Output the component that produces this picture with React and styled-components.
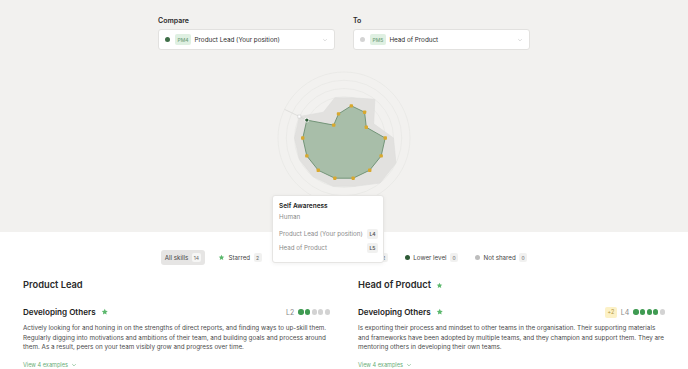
import React from "react";
import styled, { createGlobalStyle } from "styled-components";

const Global = createGlobalStyle`
  html, body { margin: 0; padding: 0; background: #fff; }
  body { font-family: Inter, "Noto Sans", sans-serif; color: #2a2a2a; -webkit-font-smoothing: antialiased; }
  * { box-sizing: border-box; }
`;

const Page = styled.div`
  width: 688px;
  min-height: 369px;
  overflow: hidden;
`;

const Top = styled.section`
  position: relative;
  height: 232px;
  background: #f2f1ef;
  display: flex;
  flex-direction: column;
  align-items: center;
  padding-top: 16px;
`;

const SelectRow = styled.div`
  display: grid;
  grid-template-columns: 177px 177px;
  column-gap: 18px;
`;

const Field = styled.div`
  display: flex;
  flex-direction: column;
  gap: 4px;
`;

const Label = styled.div`
  font-size: 7px;
  font-weight: 600;
  line-height: 9px;
  color: #2a2a2a;
`;

const SelectBox = styled.div`
  height: 21px;
  background: #fff;
  border: 1px solid #e2e1df;
  border-radius: 3px;
  display: flex;
  align-items: center;
  padding: 0 6px 0 6px;
  gap: 3.5px;
`;

const Dot = styled.span`
  width: ${p => p.$size || 5}px;
  height: ${p => p.$size || 5}px;
  border-radius: 50%;
  background: ${p => p.$color};
  flex: none;
`;

const Code = styled.span`
  height: 11px;
  padding: 0 2.5px;
  border-radius: 2px;
  background: #dff0e2;
  color: #74a27d;
  font-size: 5px;
  display: inline-flex;
  align-items: center;
  font-weight: 500;
  margin-left: 1.5px;
`;

const SelectText = styled.span`
  font-size: 6.3px;
  color: #2a2a2a;
  flex: 1;
`;

const Chart = styled.svg`
  display: block;
  margin-top: 16px;
`;

const Tooltip = styled.div`
  position: absolute;
  left: 272px;
  top: 195px;
  width: 112px;
  height: 68px;
  background: #fff;
  border: 1px solid #e6e5e3;
  border-radius: 3px;
  box-shadow: 0 1px 4px rgba(0,0,0,0.06);
  padding: 6px 5px 0 6px;
  z-index: 5;
`;

const TipTitle = styled.div`
  font-size: 6.5px;
  font-weight: 600;
  line-height: 9px;
  color: #222;
`;

const TipSub = styled.div`
  font-size: 6.3px;
  line-height: 9px;
  color: #8a8a8a;
  margin-top: 1.5px;
  margin-bottom: 6px;
`;

const TipRow = styled.div`
  display: flex;
  justify-content: space-between;
  align-items: center;
  font-size: 6.2px;
  color: #8a8a8a;
  height: 12px;
  margin-bottom: 2px;
`;

const LevelTag = styled.span`
  width: 11px;
  height: 10px;
  border-radius: 2px;
  background: #f1f1f0;
  color: #555;
  font-size: 5px;
  font-weight: 600;
  display: inline-flex;
  align-items: center;
  justify-content: center;
`;

const Filters = styled.div`
  display: flex;
  justify-content: center;
  align-items: center;
  gap: 9px;
  margin-top: 18px;
  padding-left: 4px;
`;

const Pill = styled.div`
  height: 15px;
  display: flex;
  align-items: center;
  gap: 3.5px;
  padding: 0 4px;
  border-radius: 3px;
  background: ${p => (p.$active ? "#e6e5e4" : "transparent")};
  font-size: 6.2px;
  color: #444;
`;

const Count = styled.span`
  min-width: 8px;
  height: 9px;
  padding: 0 2px;
  border-radius: 2px;
  background: ${p => (p.$active ? "#f6f6f5" : "#f1f1f0")};
  color: #666;
  font-size: 5px;
  display: inline-flex;
  align-items: center;
  justify-content: center;
`;

const Columns = styled.div`
  display: grid;
  grid-template-columns: 1fr 1fr;
  column-gap: 28px;
  padding: 0 23px;
  margin-top: 14px;
`;

const Column = styled.div`
  display: flex;
  flex-direction: column;
`;

const ColTitle = styled.h2`
  margin: 0;
  font-size: 9.3px;
  font-weight: 600;
  line-height: 12px;
  color: #2a2a2a;
  display: flex;
  align-items: center;
  gap: 5px;
`;

const SkillHead = styled.div`
  display: flex;
  align-items: center;
  justify-content: space-between;
  margin-top: 15px;
  height: 12px;
`;

const SkillName = styled.h3`
  margin: 0;
  font-size: 8.1px;
  font-weight: 600;
  color: #222;
  display: flex;
  align-items: center;
  gap: 5px;
`;

const LevelBox = styled.div`
  display: flex;
  align-items: center;
  gap: 4px;
  font-size: 7px;
  color: #888;
`;

const Dots = styled.div`
  display: flex;
  gap: 1.3px;
`;

const Plus = styled.span`
  width: 12px;
  height: 11px;
  border-radius: 2px;
  background: #fcf1c6;
  color: #b0963f;
  font-size: 5.5px;
  display: inline-flex;
  align-items: center;
  justify-content: center;
`;

const Desc = styled.p`
  margin: 6px 0 0;
  font-size: 6.3px;
  line-height: 9.6px;
  color: #4a4a4a;
`;

const Examples = styled.div`
  margin-top: 9px;
  font-size: 5.6px;
  color: #6aae78;
  display: flex;
  align-items: center;
  gap: 3px;
`;

const Star = ({ size = 7 }) => (
  <svg width={size} height={size} viewBox="0 0 24 24">
    <path
      d="M12 2.5l2.9 6.1 6.6.8-4.9 4.6 1.3 6.6L12 17.3l-5.9 3.3 1.3-6.6-4.9-4.6 6.6-.8z"
      fill="#5cb86d"
    />
  </svg>
);

const Chevron = ({ size = 6, color = "#c4c4c4" }) => (
  <svg width={size} height={size} viewBox="0 0 10 10">
    <path d="M2 3.5l3 3 3-3" fill="none" stroke={color} strokeWidth="1" />
  </svg>
);

const C = 72;
const unit = 8.25;
const angle = k => ((-77.143 + k * 25.714) * Math.PI) / 180;
const pt = (k, L) => {
  const r = unit * (L + 1);
  return [C + r * Math.cos(angle(k)), C + r * Math.sin(angle(k))];
};
const mine = [3, 3, 2, 4, 4, 4, 4, 4, 4, 4, 4, 4, 1, 2];
const theirs = [4, 5, 3, 5, 6, 6, 5, 5, 5, 5, 5, 5, 3, 4];
const poly = arr => arr.map((L, k) => pt(k, L).map(v => v.toFixed(1)).join(",")).join(" ");

function Radar() {
  const sel = 11;
  const outer = [C + 66 * Math.cos(angle(sel)), C + 66 * Math.sin(angle(sel))];
  const selMine = pt(sel, mine[sel]);
  const selTheirs = pt(sel, theirs[sel]);
  return (
    <Chart width="144" height="144" viewBox="0 0 144 144">
      {[16.5, 24.75, 33, 41.25, 49.5, 57.75, 66].map(r => (
        <circle key={r} cx={C} cy={C} r={r} fill="none" stroke="#e7e6e4" strokeWidth="0.7" />
      ))}
      <polygon points={poly(theirs)} fill="#e2e1df" stroke="#dedddb" strokeWidth="0.6" />
      <line x1={C} y1={C} x2={outer[0]} y2={outer[1]} stroke="#d6d5d3" strokeWidth="0.7" />
      <polygon points={poly(mine)} fill="#a8bea9" stroke="#6b8e70" strokeWidth="0.9" />
      {mine.map((L, k) => {
        if (k === sel) return null;
        const [x, y] = pt(k, L);
        return <rect key={k} x={x - 1.7} y={y - 1.7} width="3.4" height="3.4" rx="0.8" fill="#d8a82e" />;
      })}
      <rect x={selTheirs[0] - 1.5} y={selTheirs[1] - 1.5} width="3" height="3" fill="#fff" stroke="#cfcfcf" strokeWidth="0.6" />
      <circle cx={selMine[0]} cy={selMine[1]} r="2.4" fill="#fff" />
      <circle cx={selMine[0]} cy={selMine[1]} r="1.7" fill="#2e5a36" />
    </Chart>
  );
}

function LevelDots({ filled, total = 5 }) {
  return (
    <Dots>
      {Array.from({ length: total }).map((_, i) => (
        <Dot key={i} $size={5.3} $color={i < filled ? "#3f9b52" : "#d3d3d3"} />
      ))}
    </Dots>
  );
}

export default function App() {
  return (
    <Page>
      <Global />
      <Top>
        <SelectRow>
          <Field>
            <Label>Compare</Label>
            <SelectBox>
              <Dot $color="#3f6e48" />
              <Code>PM4</Code>
              <SelectText>Product Lead (Your position)</SelectText>
              <Chevron />
            </SelectBox>
          </Field>
          <Field>
            <Label>To</Label>
            <SelectBox>
              <Dot $color="#d4d4d4" />
              <Code>PM5</Code>
              <SelectText>Head of Product</SelectText>
              <Chevron />
            </SelectBox>
          </Field>
        </SelectRow>
        <Radar />
        <Tooltip>
          <TipTitle>Self Awareness</TipTitle>
          <TipSub>Human</TipSub>
          <TipRow>
            <span>Product Lead (Your position)</span>
            <LevelTag>L4</LevelTag>
          </TipRow>
          <TipRow>
            <span>Head of Product</span>
            <LevelTag>L5</LevelTag>
          </TipRow>
        </Tooltip>
      </Top>

      <Filters>
        <Pill $active>
          All skills <Count $active>14</Count>
        </Pill>
        <Pill>
          <Star size={7} /> Starred <Count>2</Count>
        </Pill>
        <Pill>
          <Dot $color="#8fc79a" /> Higher <Count>12</Count>
        </Pill>
        <Pill>
          <Dot $color="#3f9b52" /> Same level <Count>2</Count>
        </Pill>
        <Pill>
          <Dot $color="#2e5a36" /> Lower level <Count>0</Count>
        </Pill>
        <Pill>
          <Dot $color="#bdbdbd" /> Not shared <Count>0</Count>
        </Pill>
      </Filters>

      <Columns>
        <Column>
          <ColTitle>Product Lead</ColTitle>
          <SkillHead>
            <SkillName>
              Developing Others <Star size={7.5} />
            </SkillName>
            <LevelBox>
              L2 <LevelDots filled={2} />
            </LevelBox>
          </SkillHead>
          <Desc>
            Actively looking for and honing in on the strengths of direct reports, and finding ways to up-skill them.
            Regularly digging into motivations and ambitions of their team, and building goals and process around
            them. As a result, peers on your team visibly grow and progress over time.
          </Desc>
          <Examples>
            View 4 examples <Chevron size={6} color="#6aae78" />
          </Examples>
        </Column>
        <Column>
          <ColTitle>
            Head of Product <Star size={7} />
          </ColTitle>
          <SkillHead>
            <SkillName>
              Developing Others <Star size={7.5} />
            </SkillName>
            <LevelBox>
              <Plus>+2</Plus> L4 <LevelDots filled={4} />
            </LevelBox>
          </SkillHead>
          <Desc>
            Is exporting their process and mindset to other teams in the organisation. Their supporting materials
            and frameworks have been adopted by multiple teams, and they champion and support them. They are
            mentoring others in developing their own teams.
          </Desc>
          <Examples>
            View 4 examples <Chevron size={6} color="#6aae78" />
          </Examples>
        </Column>
      </Columns>
    </Page>
  );
}
